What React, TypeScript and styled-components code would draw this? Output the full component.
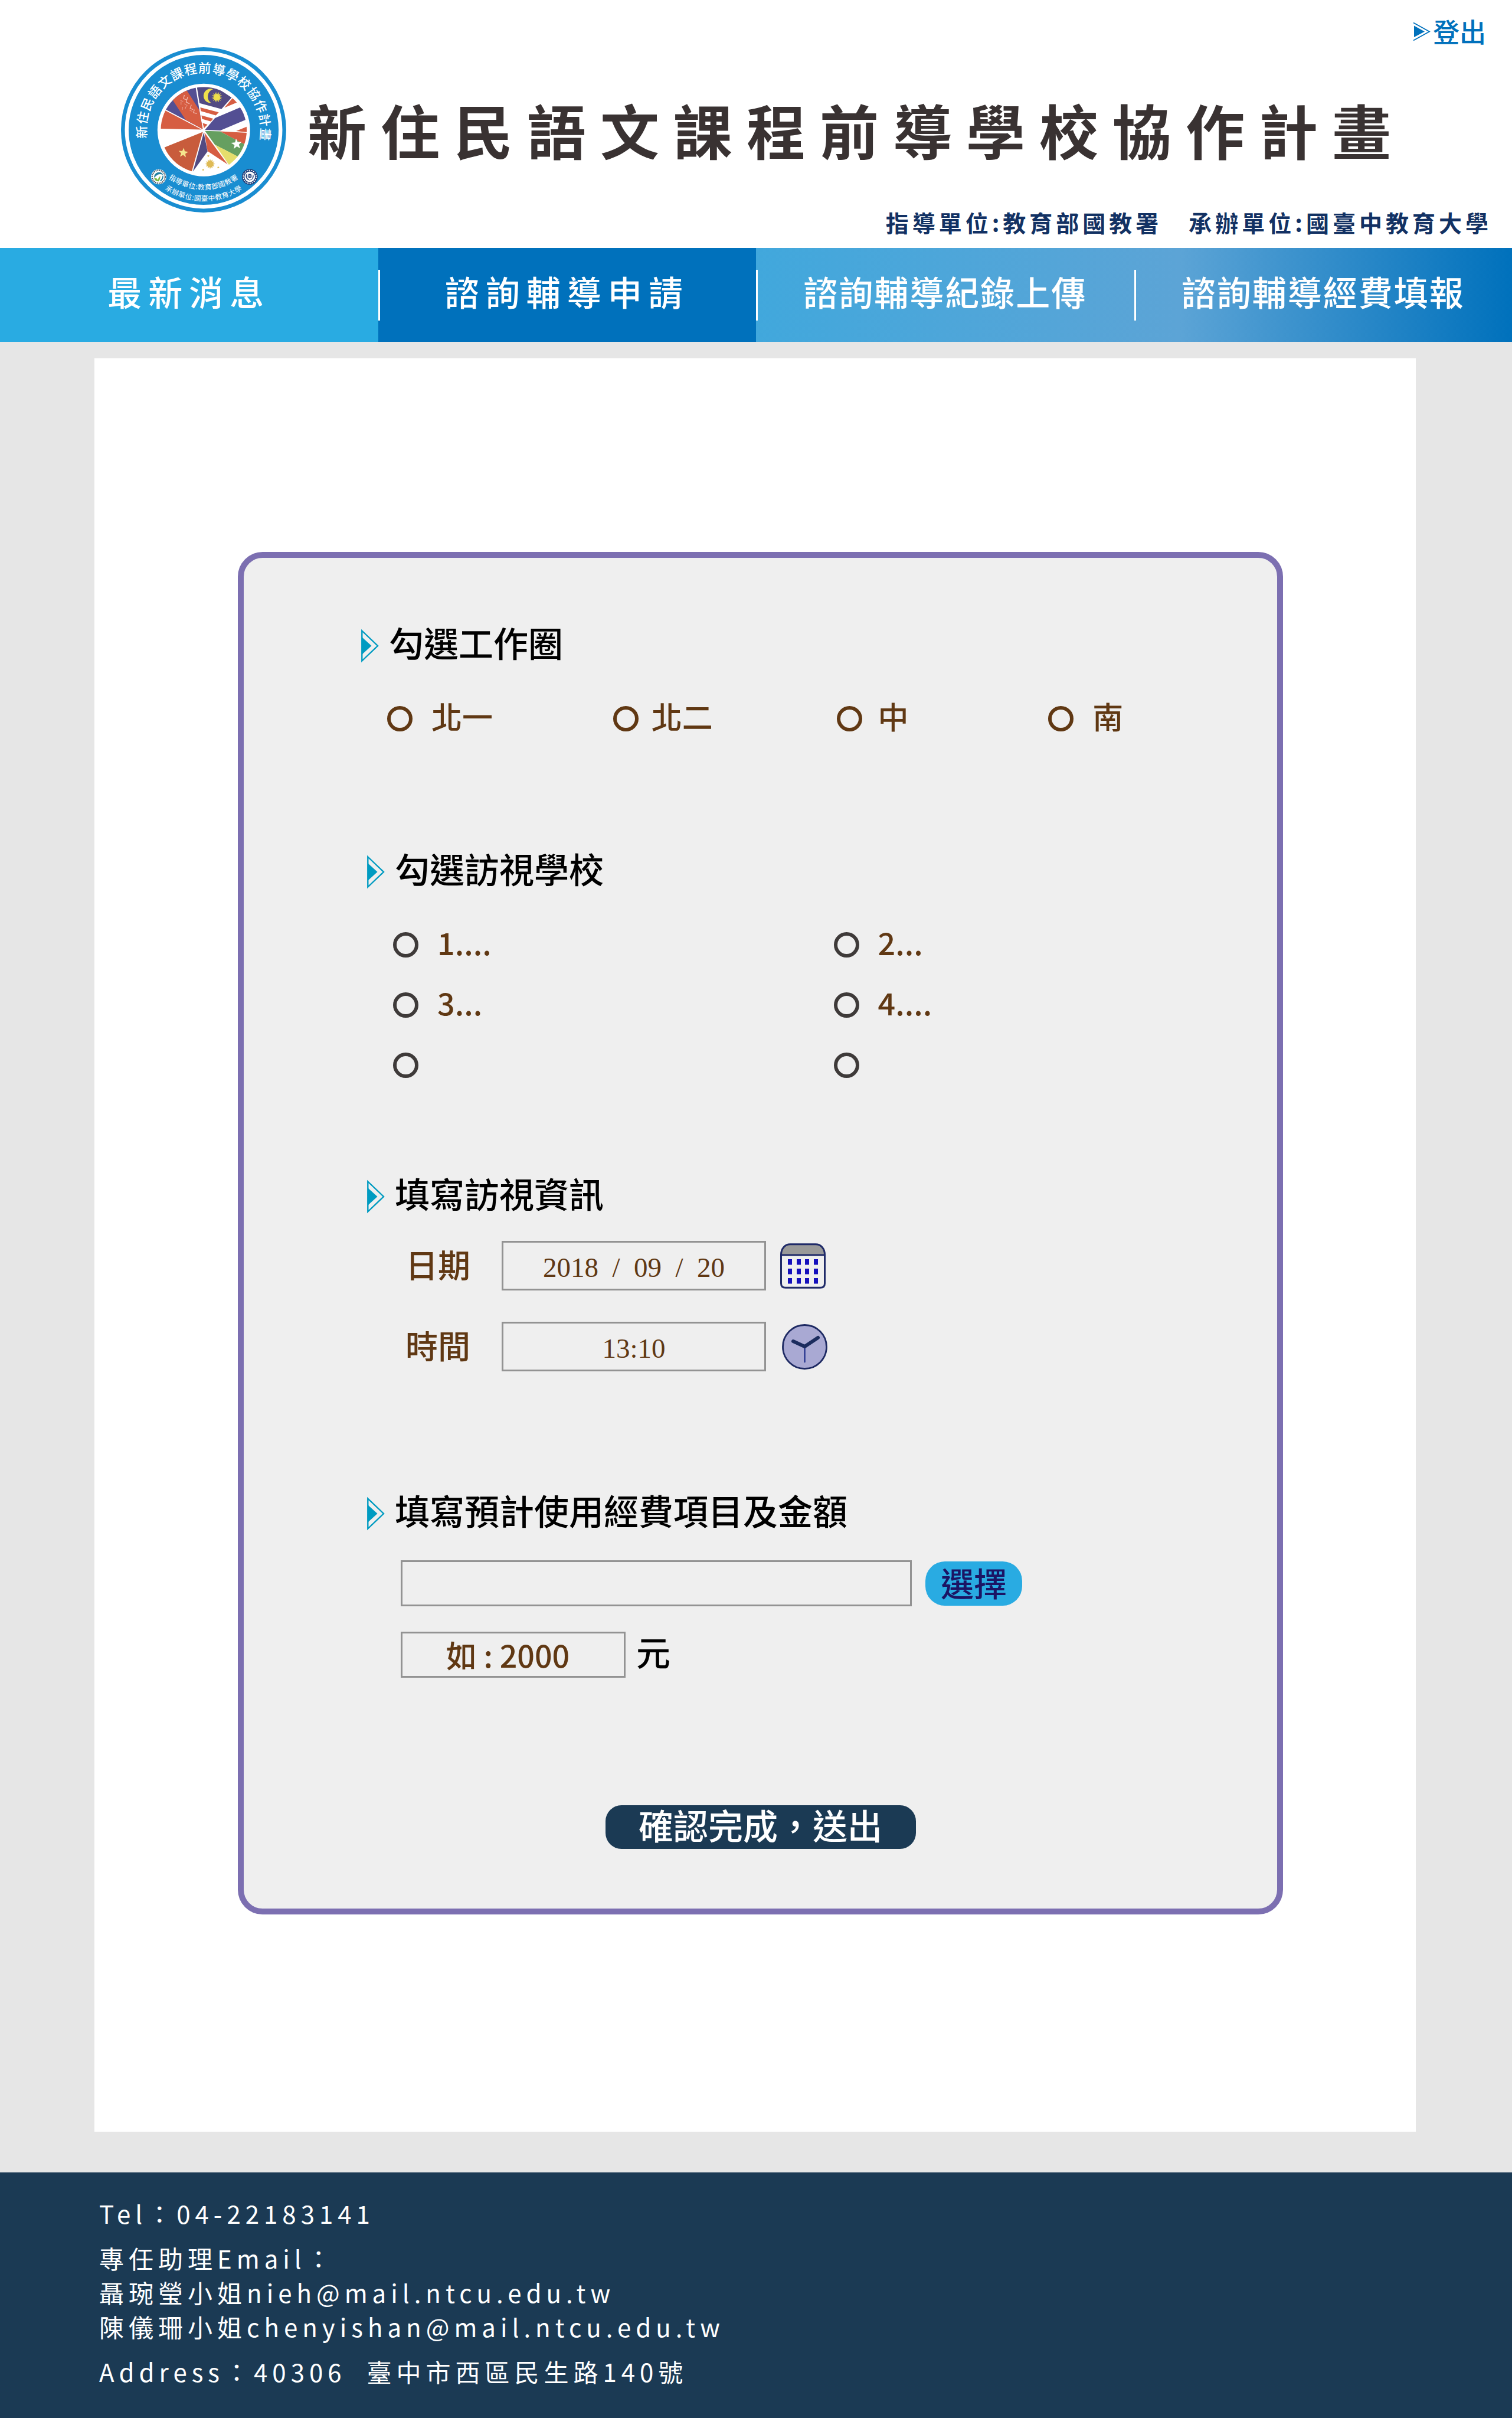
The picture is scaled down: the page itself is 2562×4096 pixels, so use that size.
import React from "react";
import styled, { createGlobalStyle, css } from "styled-components";

const BROWN = "#603813";
const NAVY = "#1b3a54";
const SKY = "#29abe2";
const BLUE = "#0071bc";
const BORDER = "#939393";

const GlobalStyle = createGlobalStyle`
  *, *::before, *::after { box-sizing: border-box; }
  body {
    margin: 0;
    background: #fff;
    font-family: "Noto Sans CJK TC", "Noto Sans", sans-serif;
    color: #000;
  }
  h1, h2, p { margin: 0; font-weight: inherit; }
  a { color: inherit; text-decoration: none; }
  button, input { font-family: inherit; }
  svg { display: block; flex: none; }
`;

/* ---------- header ---------- */

const Header = styled.header`
  display: flex;
  gap: 36px;
  padding: 23px 34px 19px 205px;
`;

const LogoBox = styled.div`
  flex: none;
  padding-top: 57px;
`;

const Brand = styled.div`
  flex: 1;
  display: flex;
  flex-direction: column;
`;

const Logout = styled.a`
  align-self: flex-end;
  display: flex;
  align-items: center;
  gap: 4px;
  padding-right: 10px;
  font-size: 45px;
  line-height: 60px;
  font-weight: 500;
  color: ${BLUE};
`;

const Title = styled.h1`
  margin-top: 76px;
  font-size: 100px;
  line-height: 120px;
  font-weight: 700;
  letter-spacing: 24px;
  white-space: nowrap;
  color: #393232;
`;

const Units = styled.p`
  margin-top: 72px;
  font-size: 39px;
  line-height: 50px;
  font-weight: 700;
  letter-spacing: 6px;
  text-align: right;
  white-space: pre;
  color: #123163;
`;

/* ---------- navigation ---------- */

const Nav = styled.nav`
  display: flex;
  background: linear-gradient(90deg, ${SKY} 25%, #5ca4d6 78%, ${BLUE} 100%);
`;

const NavLink = styled.a<{ $active?: boolean; $divided?: boolean; $wide?: boolean }>`
  flex: 1;
  padding: 43px 0 56px;
  font-size: 58px;
  line-height: 60px;
  font-weight: 500;
  letter-spacing: ${(p) => (p.$wide ? 11 : 2)}px;
  text-align: center;
  white-space: nowrap;
  color: #fff;
  background-color: ${(p) => (p.$active ? BLUE : "transparent")};
  ${(p) =>
    p.$divided &&
    css`
      background-image: linear-gradient(#fff, #fff);
      background-size: 3px 86px;
      background-position: left center;
      background-repeat: no-repeat;
    `}
`;

/* ---------- body ---------- */

const Main = styled.main`
  padding: 28px 163px 69px 160px;
  background: #e6e6e6;
`;

const Sheet = styled.div`
  padding: 328px 225px 368px 243px;
  background: #fff;
`;

const Panel = styled.form`
  display: flex;
  flex-direction: column;
  padding: 113px 0 101px 199px;
  border: 10px solid #7c6fb1;
  border-radius: 42px;
  background: #efefef;
`;

const Section = styled.section<{ $indent?: number; $after: number }>`
  padding-left: ${(p) => p.$indent ?? 10}px;
  margin-bottom: ${(p) => p.$after}px;
`;

const Heading = styled.h2`
  display: flex;
  align-items: flex-start;
  gap: 17px;
  height: 65px;
  font-size: 59px;
  line-height: 60px;
  font-weight: 500;

  svg {
    margin-top: 7px;
  }
`;

const Options = styled.div<{ $columns: string }>`
  display: grid;
  grid-template-columns: ${(p) => p.$columns};
  row-gap: 42px;
  margin-top: 64px;
  padding-left: 44px;
`;

const Option = styled.label<{ $gap?: number }>`
  display: flex;
  align-items: center;
  gap: ${(p) => p.$gap ?? 32}px;
  height: 60px;
  font-size: 52px;
  line-height: 52px;
  font-weight: 500;
  color: ${BROWN};
`;

const OptionText = styled.span`
  padding-bottom: 8px;
`;

const Radio = styled.input<{ $tone: string }>`
  appearance: none;
  flex: none;
  width: 43px;
  height: 43px;
  margin: 0;
  border: 6px solid ${(p) => p.$tone};
  border-radius: 50%;

  &:checked {
    background: radial-gradient(${(p) => p.$tone} 40%, transparent 45%);
  }
`;

const Fields = styled.div<{ $left: number; $top: number; $gap: number }>`
  display: flex;
  flex-direction: column;
  gap: ${(p) => p.$gap}px;
  margin-top: ${(p) => p.$top}px;
  padding-left: ${(p) => p.$left}px;
`;

const Field = styled.div<{ $gap: number }>`
  display: flex;
  align-items: center;
  gap: ${(p) => p.$gap}px;
`;

const FieldLabel = styled.label`
  width: 139px;
  padding-bottom: 8px;
  font-size: 55px;
  line-height: 60px;
  font-weight: 500;
  color: ${BROWN};
`;

const TextInput = styled.input<{ $width: number; $tall?: boolean }>`
  width: ${(p) => p.$width}px;
  height: ${(p) => (p.$tall ? 84 : 78)}px;
  padding: 0 18px 2px 0;
  border: 3px solid ${BORDER};
  border-radius: 0;
  background: transparent;
  font-size: 52px;
  font-weight: 500;
  text-align: center;
  color: ${BROWN};

  &::placeholder {
    color: ${BROWN};
    opacity: 1;
  }
`;

const TimeInput = styled(TextInput)`
  padding: 6px 0 0;
  font-family: "Liberation Serif", "Noto Sans CJK TC", serif;
  font-size: 47px;
  font-weight: 400;
`;

const IconButton = styled.button`
  padding: 0;
  border: 0;
  background: none;
`;

const PickButton = styled.button`
  height: 75px;
  padding: 0 26px 4px;
  border: 0;
  border-radius: 33px;
  background: ${SKY};
  font-size: 56px;
  line-height: 70px;
  font-weight: 500;
  color: #1b1464;
`;

const Unit = styled.span`
  font-size: 58px;
  line-height: 60px;
  font-weight: 500;
  padding-bottom: 12px;
`;

const Submit = styled.button`
  align-self: center;
  width: 526px;
  height: 74px;
  margin-right: 199px;
  padding: 0 0 8px;
  border: 0;
  border-radius: 27px;
  background: ${NAVY};
  font-size: 59px;
  line-height: 66px;
  font-weight: 500;
  white-space: nowrap;
  color: #fff;
`;

/* ---------- footer ---------- */

const Footer = styled.footer`
  display: flex;
  flex-direction: column;
  gap: 18px;
  padding: 40px 168px 50px;
  background: ${NAVY};
  font-size: 42px;
  line-height: 58px;
  letter-spacing: 8px;
  white-space: pre;
  color: #fff;
`;

/* ---------- drawings ---------- */

const Marker = () => (
  <svg width="30" height="58" viewBox="0 0 30 58" aria-hidden="true">
    <path d="M1.3 3.5 28 29 1.3 54.5Z" fill="none" stroke="#009bc1" strokeWidth="2.4" />
    <path d="M1 14 17.500 29 1 44Z" fill="#009bc1" />
  </svg>
);

const LogoutMark = () => (
  <svg width="30" height="33" viewBox="0 0 30 33" aria-hidden="true">
    <path d="M1 1.500 28 16.500 1 31.500" fill="none" stroke={BLUE} strokeWidth="1.800" />
    <path d="M2 6.500 20 16.500 2 26Z" fill={BLUE} />
  </svg>
);

const CalendarIcon = () => (
  <svg width="80" height="77" viewBox="0 0 80 77" aria-hidden="true">
    <path d="M1.500 19.500C1.500 9 8 1.700 17 1.700H60C69 1.700 75.500 9 75.500 19.500Z" fill="#999" />
    <path
      d="M17 1.700H60C69 1.700 75.500 9 75.500 19.500V68Q75.500 75.300 68 75.300H9Q1.500 75.300 1.500 68V19.500C1.500 9 8 1.700 17 1.700Z"
      fill="none"
      stroke="#1f2a68"
      strokeWidth="3"
    />
    <path d="M1.500 20H75.500" stroke="#1f2a68" strokeWidth="3" />
    {[27, 43, 59].map((y) =>
      [13, 28, 42, 57].map((x) => <rect key={`${x}-${y}`} x={x} y={y} width="7" height="9.500" fill="#1510bd" />)
    )}
  </svg>
);

const ClockIcon = () => (
  <svg width="80" height="77" viewBox="0 0 80 77" aria-hidden="true">
    <circle cx="41.500" cy="38.500" r="37" fill="#a9a9d3" stroke="#1e2a63" strokeWidth="2.800" />
    <path d="M41.500 38V64" stroke="#2e3c92" strokeWidth="2.600" strokeLinecap="round" />
    <path d="M22 29 41.500 38 64 23" fill="none" stroke="#1b2c5e" strokeWidth="6" strokeLinecap="round" strokeLinejoin="round" />
  </svg>
);

const star = (cx: number, cy: number, outer: number, inner: number, points: number, turn = 0) =>
  Array.from({ length: points * 2 }, (_, i) => {
    const r = i % 2 ? inner : outer;
    const a = (Math.PI * i) / points - Math.PI / 2 + turn;
    return `${(cx + r * Math.cos(a)).toFixed(1)},${(cy + r * Math.sin(a)).toFixed(1)}`;
  }).join(" ");

const RING = Array.from("新住民語文課程前導學校協作計畫");

const Logo = () => (
  <svg width="280" height="280" viewBox="81 72 1092 1092" role="img" aria-label="新住民語文課程前導學校協作計畫">
    <defs>
      <clipPath id="disc">
        <circle cx="628" cy="619" r="284" />
      </clipPath>
      <path id="arcUpper" d="M232 618A395 395 0 0 0 1022 618" />
      <path id="arcLower" d="M157 618A470 470 0 0 0 1097 618" />
    </defs>
    <circle cx="627" cy="618" r="546" fill="#198dd1" />
    <circle cx="627" cy="618" r="508" fill="none" stroke="#fff" strokeWidth="25" />
    <circle cx="628" cy="619" r="306" fill="#fff" />
    <g clipPath="url(#disc)">
      <path d="M620 612 378 484 340 430 420 300 574 335Z" fill="#534f93" />
      <path d="M410 402 508 345 598 486 622 614 508 552Z" fill="#d65d42" />
      <path d="M582 330H700L812 404 745 481 600 442Z" fill="#524a82" />
      <path d="M605 470 727 502 708 522 609 494ZM613 522 690 544 675 562 617 546ZM621 573 653 583 630 606Z" fill="#d65d42" />
      <path d="M690 349A47 47 0 1 0 676 440A52 52 0 0 1 690 349Z" fill="#efe04b" />
      <path d="M818 408 850 436 764 472Z" fill="#d65d42" />
      <path d="M868 470 920 545 738 622 636 618 702 540Z" fill="#534f93" />
      <path d="M920 594V634L842 626Z" fill="#d65d42" />
      <path d="M735 628 920 638V724L895 714Z" fill="#d65d42" />
      <path d="M636 625 735 628 920 726 852 794 702 716Z" fill="#669f60" />
      <path d="M702 716 856 795 795 850Z" fill="#e5dd6c" />
      <path d="M632 636 786 846 653 758Z" fill="#d65d42" />
      <path d="M628 636 653 760 556 894Z" fill="#524a82" />
      <path d="M622 632 365 735 400 900 548 895Z" fill="#c85c3c" />
      <path d="M374 490 330 500V610L615 616Z" fill="#d65d42" />
      <polygon points={star(715, 402, 37, 20, 16)} fill="#efe04b" />
      <polygon points={star(493, 770, 34, 14, 5, 0.1)} fill="#f5e58d" />
      <polygon points={star(845, 712, 37, 15, 5, -0.1)} fill="#fff" />
      <polygon points={star(670, 843, 33, 20, 12)} fill="#dfbb55" />
      <polygon points={star(658, 790, 8, 4, 5)} fill="#dfbb55" />
      <polygon points={star(724, 866, 8, 4, 5)} fill="#dfbb55" />
      <polygon points={star(624, 882, 8, 4, 5)} fill="#dfbb55" />
      <g stroke="#f0b8ae" strokeWidth="5" fill="none">
        <path d="M500 388 494 412 516 420M522 400 512 434 534 446M546 452 538 476 558 484M566 484 560 504 582 510" />
        <path d="M474 424 492 430M478 432V452M500 446 520 458M512 462 504 482M534 486 552 496M488 466 486 486" strokeWidth="3" />
      </g>
    </g>
    <g fill="#fff" fontFamily="'Noto Sans CJK TC', sans-serif" textAnchor="middle">
      {RING.map((ch, i) => (
        <text key={i} x="627" y="240" fontSize="84" fontWeight="500" transform={`rotate(${(-92 + i * 13.3).toFixed(1)} 627 618)`}>
          {ch}
        </text>
      ))}
      <text fontSize="46" letterSpacing="2">
        <textPath href="#arcUpper" startOffset="50%">指導單位:教育部國教署</textPath>
      </text>
      <text fontSize="46" letterSpacing="2">
        <textPath href="#arcLower" startOffset="50%">承辦單位:國臺中教育大學</textPath>
      </text>
    </g>
    <circle cx="330" cy="928" r="50" fill="#fff" />
    <circle cx="330" cy="928" r="43" fill="none" stroke="#4b5560" strokeWidth="9" strokeDasharray="7 5" />
    <path d="M302 930A30 30 0 0 1 356 912Q328 900 302 930ZM358 920A30 30 0 0 1 340 956Q356 940 358 920Z" fill="#1d7fa0" stroke="#1d7fa0" strokeWidth="4" />
    <path d="M300 938Q316 932 326 950 326 936 340 922 344 938 330 958 308 960 300 938Z" fill="#7cb842" />
    <circle cx="932" cy="928" r="52" fill="#1f3d78" />
    <circle cx="932" cy="928" r="43" fill="none" stroke="#fff" strokeWidth="6" strokeDasharray="9 6" />
    <circle cx="932" cy="928" r="35" fill="#fff" />
    <path d="M912 908A26 26 0 1 0 954 912L948 940 932 950 914 936Z" fill="#1f3d78" />
    <circle cx="932" cy="922" r="15" fill="#1f3d78" stroke="#fff" strokeWidth="3" />
    <path d="M921 914 942 932M922 930 942 912M916 922H948" stroke="#fff" strokeWidth="2" />
  </svg>
);

/* ---------- page ---------- */

const NAV_ITEMS = [
  { label: "最新消息", wide: true },
  { label: "諮詢輔導申請", wide: true, active: true },
  { label: "諮詢輔導紀錄上傳" },
  { label: "諮詢輔導經費填報" },
];

const CIRCLES = [
  { label: "北一", gap: 32 },
  { label: "北二", gap: 22 },
  { label: "中", gap: 26 },
  { label: "南", gap: 32 },
];

const SCHOOLS = ["1....", "2...", "3...", "4....", "", ""];

const SectionTitle = ({ children }: { children: React.ReactNode }) => (
  <Heading>
    <Marker />
    <span>{children}</span>
  </Heading>
);

export default function App() {
  return (
    <>
      <GlobalStyle />
      <Header>
        <LogoBox>
          <Logo />
        </LogoBox>
        <Brand>
          <Logout href="#logout">
            <LogoutMark />
            登出
          </Logout>
          <Title>新住民語文課程前導學校協作計畫</Title>
          <Units>指導單位:教育部國教署　承辦單位:國臺中教育大學</Units>
        </Brand>
      </Header>

      <Nav>
        {NAV_ITEMS.map((item, i) => (
          <NavLink key={item.label} href="#" $wide={item.wide} $active={item.active} $divided={i > 0}>
            {item.label}
          </NavLink>
        ))}
      </Nav>

      <Main>
        <Sheet>
          <Panel onSubmit={(e) => e.preventDefault()}>
            <Section $indent={0} $after={194}>
              <SectionTitle>勾選工作圈</SectionTitle>
              <Options $columns="383fr 380fr 358fr 388fr">
                {CIRCLES.map((c) => (
                  <Option key={c.label} $gap={c.gap}>
                    <Radio type="radio" name="circle" value={c.label} $tone={BROWN} />
                    <OptionText>{c.label}</OptionText>
                  </Option>
                ))}
              </Options>
            </Section>

            <Section $after={157}>
              <SectionTitle>勾選訪視學校</SectionTitle>
              <Options $columns="747fr 752fr">
                {SCHOOLS.map((s, i) => (
                  <Option key={i}>
                    <Radio type="radio" name="school" value={i + 1} aria-label={s || `學校 ${i + 1}`} $tone="#3e3a39" />
                    <OptionText>{s}</OptionText>
                  </Option>
                ))}
              </Options>
            </Section>

            <Section $after={205}>
              <SectionTitle>填寫訪視資訊</SectionTitle>
              <Fields $left={65} $top={46} $gap={53}>
                <Field $gap={24}>
                  <FieldLabel htmlFor="date">日期</FieldLabel>
                  <TimeInput id="date" type="text" defaultValue={"2018\u2002/\u200209\u2002/\u200220"} $width={448} $tall />
                  <IconButton type="button" aria-label="選擇日期">
                    <CalendarIcon />
                  </IconButton>
                </Field>
                <Field $gap={24}>
                  <FieldLabel htmlFor="time">時間</FieldLabel>
                  <TimeInput id="time" type="text" defaultValue="13:10" $width={448} $tall />
                  <IconButton type="button" aria-label="選擇時間">
                    <ClockIcon />
                  </IconButton>
                </Field>
              </Fields>
            </Section>

            <Section $after={216}>
              <SectionTitle>填寫預計使用經費項目及金額</SectionTitle>
              <Fields $left={57} $top={50} $gap={43}>
                <Field $gap={23}>
                  <TextInput type="text" aria-label="經費項目" $width={866} />
                  <PickButton type="button">選擇</PickButton>
                </Field>
                <Field $gap={18}>
                  <TextInput id="amount" type="text" aria-label="金額" placeholder="如 : 2000" $width={381} />
                  <Unit>元</Unit>
                </Field>
              </Fields>
            </Section>

            <Submit type="submit">確認完成，送出</Submit>
          </Panel>
        </Sheet>
      </Main>

      <Footer>
        <p>Tel：04-22183141</p>
        <div>
          <p>專任助理Email：</p>
          <p>
            聶琬瑩小姐<a href="mailto:nieh@mail.ntcu.edu.tw">nieh@mail.ntcu.edu.tw</a>
          </p>
          <p>
            陳儀珊小姐<a href="mailto:chenyishan@mail.ntcu.edu.tw">chenyishan@mail.ntcu.edu.tw</a>
          </p>
        </div>
        <p>{"Address：40306  臺中市西區民生路140號"}</p>
      </Footer>
    </>
  );
}
